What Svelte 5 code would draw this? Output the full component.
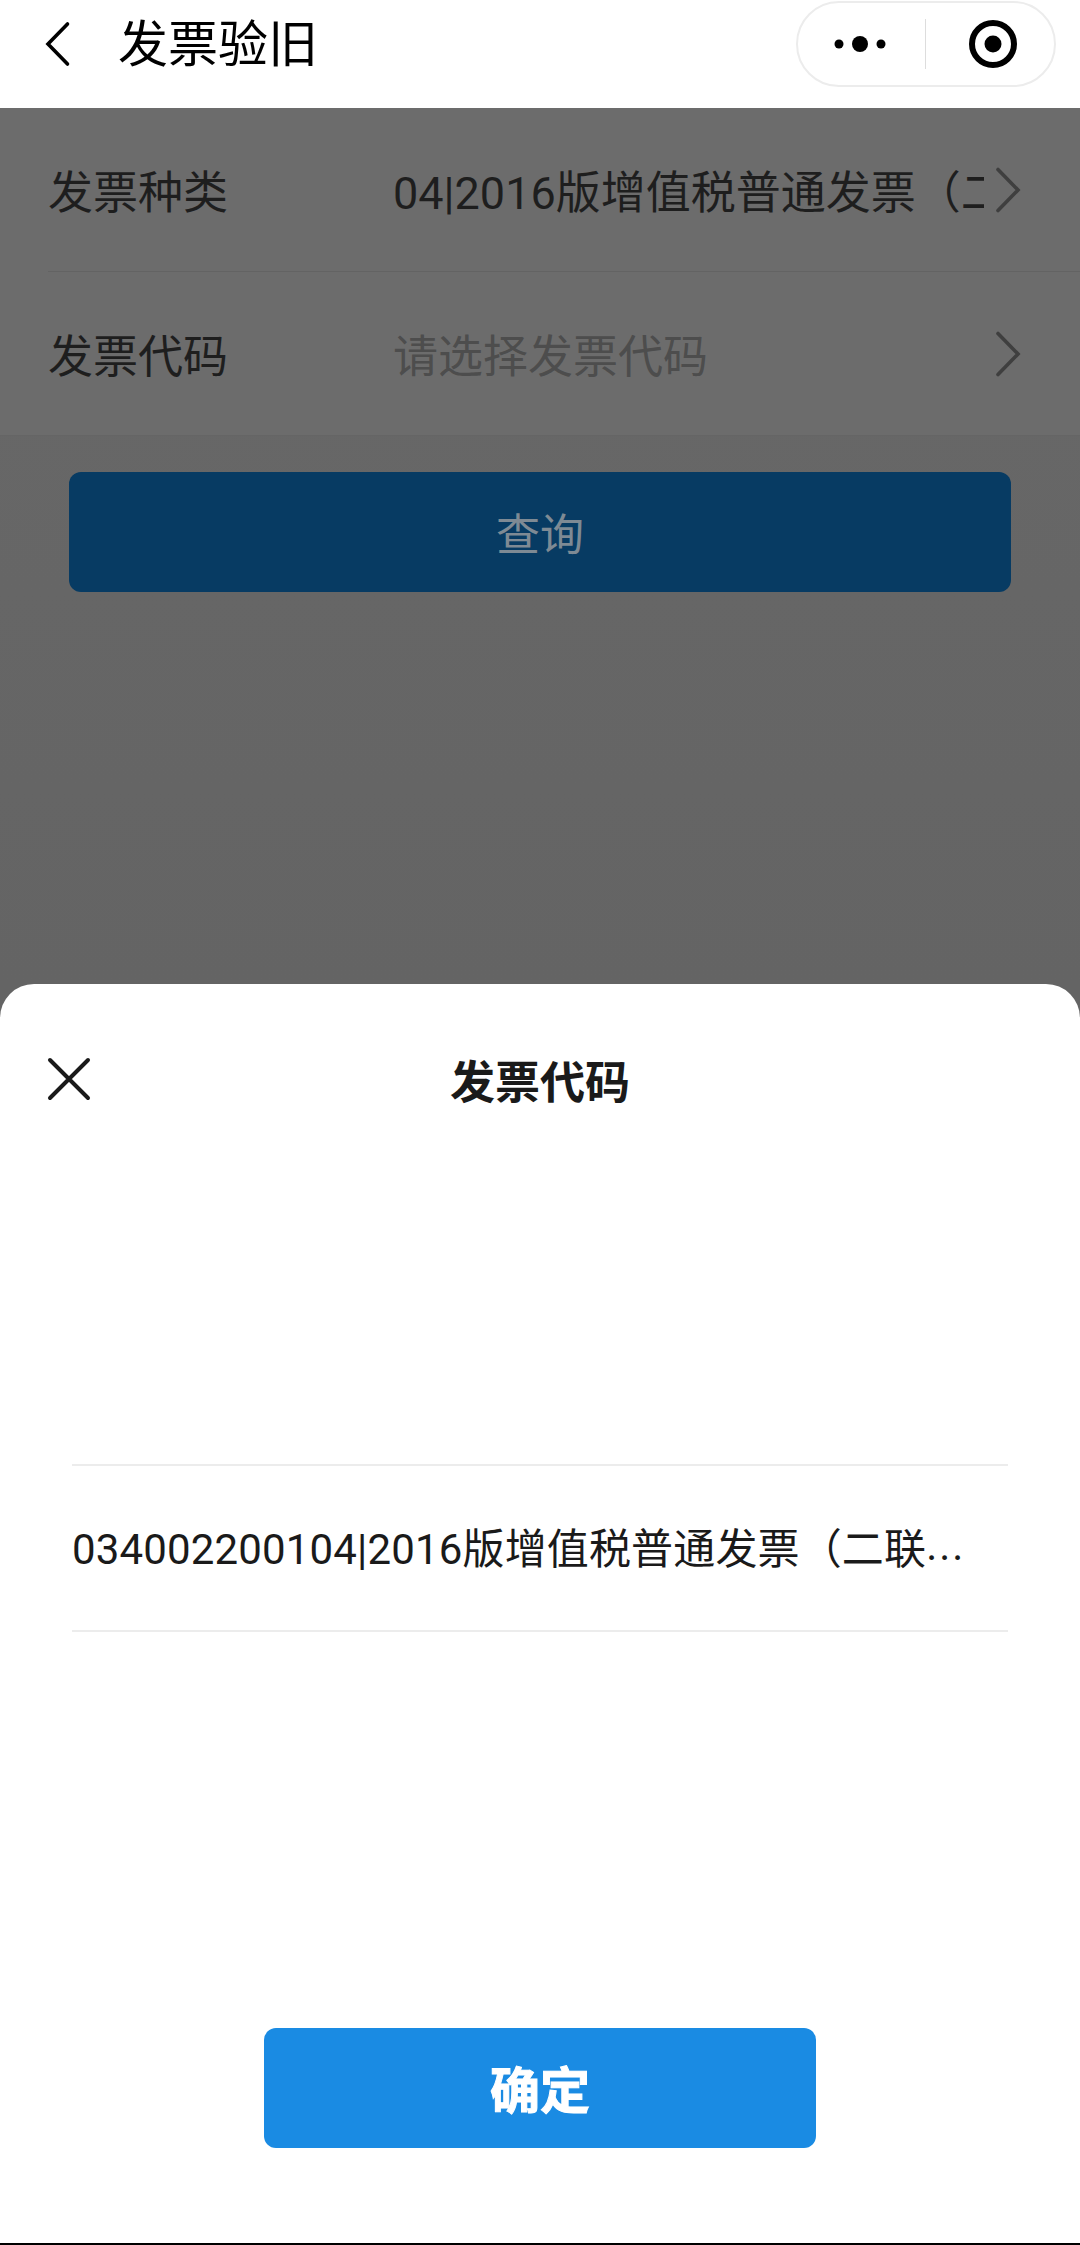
<script>
  const fields = [
    { label: '发票种类', value: '04|2016版增值税普通发票（二联折叠票）', placeholder: false },
    { label: '发票代码', value: '请选择发票代码', placeholder: true }
  ];
  const codes = ['034002200104|2016版增值税普通发票（二联'];
</script>

<div class="screen">
  <header class="nav">
    <svg class="back" width="30" height="48" viewBox="0 0 30 48" aria-hidden="true">
      <path d="M23.5 4 L4 24 L23.5 44" fill="none" stroke="#000" stroke-width="3.6" stroke-linecap="round" />
    </svg>
    <h1>发票验旧</h1>
    <div class="capsule">
      <svg width="56" height="20" viewBox="0 0 56 20" aria-hidden="true">
        <circle cx="5" cy="10" r="4.5" fill="#000" />
        <circle cx="26" cy="10" r="8" fill="#000" />
        <circle cx="47" cy="10" r="4.5" fill="#000" />
      </svg>
      <span class="divider"></span>
      <svg width="48" height="48" viewBox="0 0 48 48" aria-hidden="true">
        <circle cx="24" cy="24" r="21" fill="none" stroke="#000" stroke-width="6" />
        <circle cx="24" cy="24" r="8.5" fill="#000" />
      </svg>
    </div>
  </header>

  <!-- Page content sits dimmed behind the bottom sheet -->
  <section class="form">
    {#each fields as field}
      <div class="row">
        <span class="label">{field.label}</span>
        <span class="value" class:placeholder={field.placeholder}>{field.value}</span>
        <svg class="chevron" width="30" height="46" viewBox="0 0 30 46" aria-hidden="true">
          <path d="M5 2.5 L25 23 L5 43.5" fill="none" stroke="#3f3f3f" stroke-width="3.6" stroke-linecap="round" />
        </svg>
      </div>
    {/each}
  </section>

  <button class="query" type="button">查询</button>

  <div class="sheet">
    <div class="sheet-head">
      <svg class="close" width="44" height="44" viewBox="0 0 44 44" aria-hidden="true">
        <path d="M3 3 L41 41 M41 3 L3 41" fill="none" stroke="#1a1a1a" stroke-width="4" stroke-linecap="round" />
      </svg>
      <h2>发票代码</h2>
    </div>
    <ul class="codes">
      {#each codes as code}
        <li>{code}<span class="more">...</span></li>
      {/each}
    </ul>
    <button class="confirm" type="button">确定</button>
  </div>
</div>

<style>
  :global(body) {
    margin: 0;
    background: #fff;
  }

  .screen {
    position: relative;
    width: 1080px;
    height: 2245px;
    overflow: hidden;
    background: linear-gradient(#696969, #646464 984px);
    font-family: Roboto, "Noto Sans CJK SC", sans-serif;
    color: #1a1a1a;
  }

  .nav {
    display: flex;
    align-items: center;
    height: 108px;
    padding: 0 24px 20px 44px;
    box-sizing: border-box;
    background: #fff;
  }

  .back {
    flex: none;
  }

  .nav h1 {
    flex: 1;
    margin: 2px 0 0 44px;
    font-size: 50px;
    font-weight: 400;
    color: #000;
    line-height: 1;
  }

  .capsule {
    display: flex;
    align-items: center;
    box-sizing: border-box;
    width: 260px;
    height: 86px;
    padding-left: 36px;
    border: 2px solid #ececec;
    border-radius: 43px;
  }

  .divider {
    width: 1px;
    height: 50px;
    margin: 0 43px 0 35px;
    background: #ddd;
  }

  .form {
    padding-left: 48px;
    background: #6c6c6c;
    border-bottom: 1px solid #656565;
  }

  .row {
    display: flex;
    align-items: center;
    height: 163px;
    border-bottom: 1px solid #636363;
    font-size: 45px;
    color: #1e1e1e;
  }

  .row:last-child {
    border-bottom: 0;
  }

  .label {
    flex: none;
    width: 345px;
  }

  .value {
    flex: none;
    width: 591px;
    overflow: hidden;
    white-space: nowrap;
  }

  .placeholder {
    color: #4d4d4d;
  }

  .chevron {
    flex: none;
    margin-left: 9px;
  }

  .query {
    display: block;
    width: 942px;
    height: 120px;
    margin: 36px auto 0;
    border: 0;
    border-radius: 12px;
    background: #073b63;
    color: #7e8a94;
    font: inherit;
    font-size: 44px;
  }

  .sheet {
    position: absolute;
    inset: 984px 0 2px;
    display: flex;
    flex-direction: column;
    background: #fff;
    border-radius: 34px 34px 0 0;
  }

  .sheet-head {
    position: relative;
    height: 192px;
    display: flex;
    justify-content: center;
  }

  .close {
    position: absolute;
    left: 47px;
    top: 73px;
  }

  .sheet h2 {
    margin: 77px 0 0;
    font-size: 45px;
    font-weight: 700;
    line-height: 45px;
  }

  .codes {
    list-style: none;
    margin: 288px 72px 0;
    padding: 0;
    border-top: 2px solid #ececec;
  }

  .codes li {
    display: flex;
    align-items: center;
    box-sizing: border-box;
    height: 166px;
    padding-bottom: 6px;
    border-bottom: 2px solid #ececec;
    font-size: 42px;
    letter-spacing: 0.15px;
    white-space: nowrap;
    color: #1a1a1a;
  }

  .more {
    letter-spacing: 2px;
  }

  .confirm {
    display: block;
    width: 552px;
    height: 120px;
    margin: 396px auto 0;
    padding-bottom: 3px;
    border: 0;
    border-radius: 12px;
    background: #1a8be3;
    color: #fff;
    font: inherit;
    font-size: 50px;
    font-weight: 700;
    -webkit-text-stroke: 1px #fff;
  }

  .screen::after {
    content: "";
    position: absolute;
    left: 0;
    right: 0;
    bottom: 0;
    height: 2px;
    background: #000;
  }
</style>
